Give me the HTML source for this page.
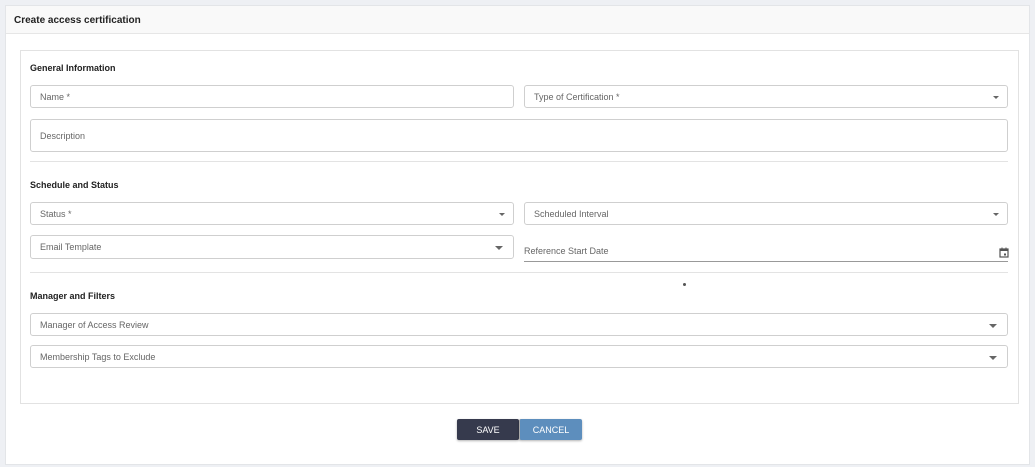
<!DOCTYPE html>
<html><head><style>
*{box-sizing:border-box;margin:0;padding:0}
body{width:1035px;height:467px;background:#eef0f4;font-family:"Liberation Sans",sans-serif;position:relative;overflow:hidden}
.card{position:absolute;left:5px;top:5px;width:1025px;height:460px;background:#fff;border:1px solid #e3e5e8}
.hdr{position:absolute;left:0;top:0;width:100%;height:28px;background:#f9f9f9;border-bottom:1px solid #e6e6e6;font-size:10px;font-weight:bold;color:#222;padding:9px 0 0 8px}
.box{position:absolute;left:20px;top:50px;width:999px;height:354px;border:1px solid #e2e2e2;background:#fff}
.t{position:absolute;font-size:9px;font-weight:bold;color:#222}
.f{position:absolute;border:1px solid #cfcfcf;border-radius:3px;font-size:9px;color:#666;padding-left:9px;display:flex;align-items:center}
.ar{position:absolute;right:8px;top:50%;margin-top:-1px;width:0;height:0;border-left:3px solid transparent;border-right:3px solid transparent;border-top:3px solid #666}
.ar.b{right:10px;border-left-width:4px;border-right-width:4px;border-top-width:4px}
.hr{position:absolute;left:30px;width:978px;height:1px;background:#e3e3e3}
.btn{position:absolute;top:419px;height:21px;color:#fff;font-size:9px;display:flex;align-items:center;justify-content:center;border-radius:2px;box-shadow:0 1px 2px rgba(0,0,0,.3)}
</style></head><body>
<div class="card"><div class="hdr">Create access certification</div></div>
<div class="box"></div>
<div class="t" style="left:30px;top:63px">General Information</div>
<div class="f" style="left:30px;top:85px;width:484px;height:23px">Name *</div>
<div class="f" style="left:524px;top:85px;width:484px;height:23px">Type of Certification *<span class="ar"></span></div>
<div class="f" style="left:30px;top:119px;width:978px;height:33px">Description</div>
<div class="hr" style="top:161px"></div>
<div class="t" style="left:30px;top:180px">Schedule and Status</div>
<div class="f" style="left:30px;top:202px;width:484px;height:23px">Status *<span class="ar"></span></div>
<div class="f" style="left:524px;top:202px;width:484px;height:23px">Scheduled Interval<span class="ar"></span></div>
<div class="f" style="left:30px;top:235px;width:484px;height:24px">Email Template<span class="ar b"></span></div>
<div style="position:absolute;left:524px;top:246px;font-size:9px;color:#666">Reference Start Date</div>
<div style="position:absolute;left:524px;top:261px;width:484px;height:1px;background:#999"></div>
<svg style="position:absolute;left:999px;top:247px" width="10" height="11" viewBox="0 0 10 11"><rect x="1" y="2" width="8" height="8" fill="none" stroke="#555" stroke-width="1.2"/><rect x="1" y="2" width="8" height="2" fill="#555"/><rect x="2.5" y="0.5" width="1" height="2" fill="#555"/><rect x="6.5" y="0.5" width="1" height="2" fill="#555"/><rect x="5" y="6.5" width="2" height="2" fill="#555"/></svg>
<div class="hr" style="top:272px"></div>
<div style="position:absolute;left:683px;top:283px;width:3px;height:3px;border-radius:50%;background:#555"></div>
<div class="t" style="left:30px;top:291px">Manager and Filters</div>
<div class="f" style="left:30px;top:313px;width:978px;height:23px">Manager of Access Review<span class="ar b"></span></div>
<div class="f" style="left:30px;top:345px;width:978px;height:23px">Membership Tags to Exclude<span class="ar b"></span></div>
<div class="btn" style="left:457px;width:62px;background:#363a4d">SAVE</div>
<div class="btn" style="left:519px;width:63px;background:#5d8ebd;border-left:1px solid #aaa">CANCEL</div>
</body></html>
